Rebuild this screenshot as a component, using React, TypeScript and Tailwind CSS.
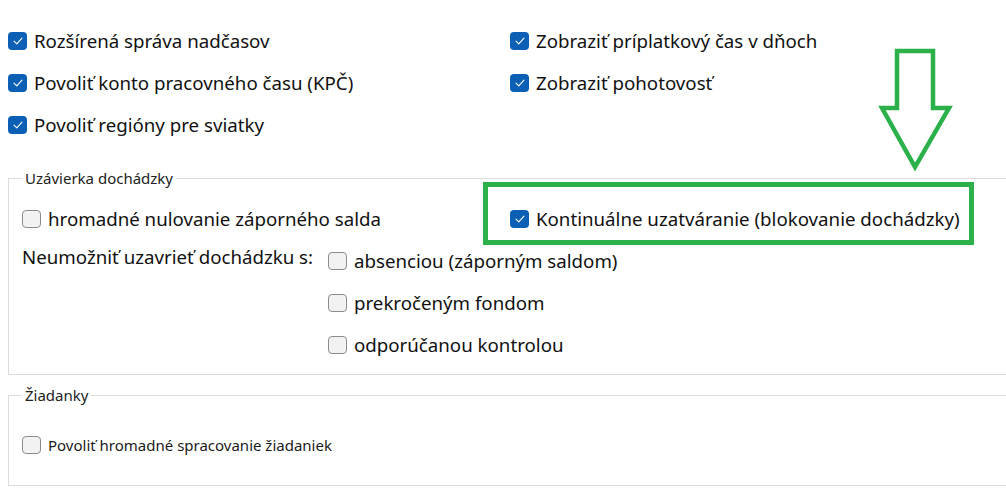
import React from "react";

type BoxProps = { checked?: boolean };

function Box({ checked }: BoxProps) {
    return checked ? (
        <span className="flex h-[18px] w-[19px] shrink-0 items-center justify-center rounded-[4px] bg-[#0b5fb5]">
            <svg width="10" height="8" viewBox="0 0 10 8" fill="none">
                <path d="M1 4.2 L3.8 6.8 L9 1.2" stroke="white" strokeWidth="1.1" strokeLinecap="round" strokeLinejoin="round" />
            </svg>
        </span>
    ) : (
        <span className="h-[18px] w-[19px] shrink-0 rounded-[4px] border border-[#8c8c8c] bg-[#f2f2f2]" />
    );
}

function Check({ label, checked, small }: { label: string; checked?: boolean; small?: boolean }) {
    return (
        <label className="flex h-[42px] items-center gap-[7px]">
            <Box checked={checked} />
            <span className={small ? "text-[15px] text-[#1a1a1a]" : "text-[18.7px] text-[#111]"}>{label}</span>
        </label>
    );
}

export default function App() {
    return (
        <div className="relative h-[492px] w-[1006px] overflow-hidden bg-white font-['Noto_Sans',sans-serif] leading-none">
            <div className="grid grid-cols-[502px_1fr] pl-[8px] pt-[20px]">
                <div>
                    <Check checked label="Rozšírená správa nadčasov" />
                    <Check checked label="Povoliť konto pracovného času (KPČ)" />
                    <Check checked label="Povoliť regióny pre sviatky" />
                </div>
                <div>
                    <Check checked label="Zobraziť príplatkový čas v dňoch" />
                    <Check checked label="Zobraziť pohotovosť" />
                </div>
            </div>

            <fieldset className="ml-[8px] mr-[-20px] mt-[22px] border border-[#dcdcdc] pb-[8px] pl-[13px]">
                <legend className="h-[20px] px-[3px] text-[15px] leading-[20px] text-[#222]">Uzávierka dochádzky</legend>
                <div className="grid grid-cols-[488px_1fr] pt-[10px]">
                    <Check label="hromadné nulovanie záporného salda" />
                    <Check checked label="Kontinuálne uzatváranie (blokovanie dochádzky)" />
                </div>
                <div className="flex">
                    <div className="flex h-[34px] w-[306px] items-center text-[18.7px] text-[#111]">
                        Neumožniť uzavrieť dochádzku s:
                    </div>
                    <div>
                        <Check label="absenciou (záporným saldom)" />
                        <Check label="prekročeným fondom" />
                        <Check label="odporúčanou kontrolou" />
                    </div>
                </div>
            </fieldset>

            <fieldset className="ml-[8px] mr-[-20px] mt-[10px] border border-[#dcdcdc] pb-[19px] pl-[13px]">
                <legend className="h-[20px] px-[3px] text-[15px] leading-[20px] text-[#222]">Žiadanky</legend>
                <div className="pt-[19px]">
                    <Check small label="Povoliť hromadné spracovanie žiadaniek" />
                </div>
            </fieldset>

            {/* annotation overlays */}
            <div className="absolute left-[483px] top-[182px] h-[63px] w-[491px] border-[5px] border-[#2bb04a]" />
            <svg className="absolute left-[870px] top-[40px]" width="90" height="140" viewBox="0 0 90 140" fill="none">
                <polygon
                    points="27,11 63,11 63,68 79,68 45,127 12,68 27,68"
                    stroke="#2bb04a"
                    strokeWidth="4.5"
                    strokeLinejoin="miter"
                />
            </svg>
        </div>
    );
}
